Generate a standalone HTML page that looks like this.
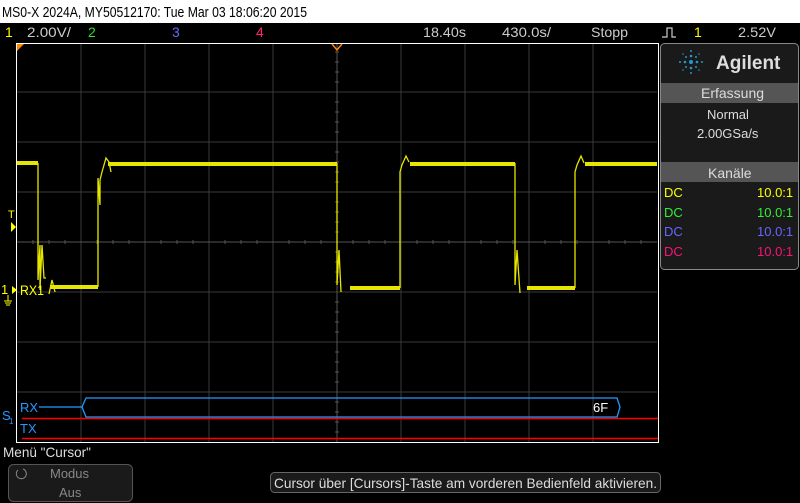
<!DOCTYPE html>
<html><head><meta charset="utf-8"><style>
html,body{margin:0;padding:0;background:#000;width:800px;height:503px;overflow:hidden}
svg{display:block}
text{font-family:"Liberation Sans",sans-serif}
</style></head><body>
<svg width="800" height="503" viewBox="0 0 800 503">
<rect width="800" height="503" fill="#000"/>
<rect width="800" height="23" fill="#fff"/>
<text x="2" y="17" font-size="15" fill="#000" textLength="305" lengthAdjust="spacingAndGlyphs">MS0-X 2024A, MY50512170: Tue Mar 03 18:06:20 2015</text>
<!-- top status -->
<g font-size="14">
<text x="5" y="37" fill="#ff0">1</text>
<text x="27" y="37" fill="#ccc" textLength="44" lengthAdjust="spacingAndGlyphs">2.00V/</text>
<text x="88" y="37" fill="#3d3">2</text>
<text x="172" y="37" fill="#66f">3</text>
<text x="256" y="37" fill="#f27">4</text>
<text x="423" y="37" fill="#ccc" textLength="43" lengthAdjust="spacingAndGlyphs">18.40s</text>
<text x="502" y="37" fill="#ccc" textLength="49" lengthAdjust="spacingAndGlyphs">430.0s/</text>
<text x="591" y="37" fill="#ccc" textLength="37" lengthAdjust="spacingAndGlyphs">Stopp</text>
<path d="M662,37 H667 V28 H672 V37 H676" stroke="#ccc" fill="none" stroke-width="1.2"/>
<text x="694" y="37" fill="#ff0">1</text>
<text x="738" y="37" fill="#ccc" textLength="38" lengthAdjust="spacingAndGlyphs">2.52V</text>
</g>
<!-- grid -->
<g stroke="#3a3a3a" stroke-width="1">
<path d="M81,43V442M145,43V442M209,43V442M273,43V442M401,43V442M465,43V442M529,43V442M593,43V442"/>
<path d="M17,92H657M17,142H657M17,192H657M17,292H657M17,342H657M17,392H657"/>
<path d="M17,242H657M337,43V442" stroke="#555"/>
</g>
<g stroke="#555">
<path d="M33,240v4M49,240v4M65,240v4M97,240v4M113,240v4M129,240v4M161,240v4M177,240v4M193,240v4M225,240v4M241,240v4M257,240v4M289,240v4M305,240v4M321,240v4M353,240v4M369,240v4M385,240v4M417,240v4M433,240v4M449,240v4M481,240v4M497,240v4M513,240v4M545,240v4M561,240v4M577,240v4M609,240v4M625,240v4M641,240v4"/>
<path d="M335,52h4M335,62h4M335,72h4M335,82h4M335,102h4M335,112h4M335,122h4M335,132h4M335,152h4M335,162h4M335,172h4M335,182h4M335,202h4M335,212h4M335,222h4M335,232h4M335,252h4M335,262h4M335,272h4M335,282h4M335,302h4M335,312h4M335,322h4M335,332h4M335,352h4M335,362h4M335,372h4M335,382h4M335,402h4M335,412h4M335,422h4M335,432h4"/>
</g>
<path d="M16.5,43V442.5H658.5V43.5H16" stroke="#fff" fill="none"/>
<path d="M17,44h7l-7,7z" fill="#f80"/>
<path d="M332,44l5,6l5,-6" stroke="#f80" fill="none" stroke-width="1.5"/>
<!-- waveform -->
<g stroke="#e6e600" fill="none">
<path stroke-width="4" d="M17,163H38M108,164H337M410,164H515M585,164H657M50,287H98M350,288H400M527,288H575"/>
<path stroke-width="1.3" d="M38,163V280L40,245V290L42,245L44,278H46M98,287V178L100,205V180L102,172L106,158L109,162L111,172M337,163V285L339,250L341,292M400,288V172L402,165L406,156L409,162M515,163V285L517,250L520,293M575,288V172L577,165L581,156L584,163M49,294L52,280L55,292"/>
</g>
<!-- left markers -->
<text x="8" y="218" font-size="11" fill="#ff0">T</text>
<path d="M11,222l5,5l-5,5z" fill="#ff0"/>
<text x="1" y="294" font-size="13" fill="#ff0">1</text>
<path d="M12,286l5,4l-5,4z" fill="#ff0"/>
<path d="M8,295v6M4,301h8M5,303h6M6,305h4" stroke="#ff0"/>
<text x="20" y="295" font-size="14" fill="#ff0" textLength="24" lengthAdjust="spacingAndGlyphs">RX1</text>
<!-- serial bus -->
<path d="M39,407H82L86,398H617L620,407L617,417H86L82,407" stroke="#29f" fill="none" stroke-width="1.3"/>
<text x="20" y="412" font-size="13" fill="#29f">RX</text>
<text x="20" y="433" font-size="13" fill="#29f">TX</text>
<text x="2" y="420" font-size="13" fill="#29f">S</text>
<text x="9" y="424" font-size="8" fill="#29f">1</text>
<text x="593" y="412" font-size="13" fill="#fff">6F</text>
<path d="M22,418.5H658M22,438.5H658" stroke="#f00" stroke-width="1.5"/>
<!-- menu -->
<text x="3" y="457" font-size="14" fill="#ddd" textLength="88" lengthAdjust="spacingAndGlyphs">Menü "Cursor"</text>
<rect x="8.5" y="464.5" width="124" height="37" rx="5" fill="#1a1a1a" stroke="#555"/>
<path d="M18,470a5,5 0 1 0 5,-1" stroke="#888" fill="none"/>
<text x="50" y="478" font-size="13" fill="#888">Modus</text>
<text x="59" y="497" font-size="13" fill="#888">Aus</text>
<rect x="270.5" y="472.5" width="390" height="20" rx="4" fill="#1a1a1a" stroke="#666"/>
<text x="274" y="488" font-size="14" fill="#ddd" textLength="383" lengthAdjust="spacingAndGlyphs">Cursor über [Cursors]-Taste am vorderen Bedienfeld aktivieren.</text>
<!-- right panel -->
<rect x="660.5" y="43.5" width="138" height="226" rx="4" fill="#1a1a1a" stroke="#888"/>
<g fill="#29c">
<circle cx="691" cy="62" r="2"/><circle cx="685" cy="62" r="1.3"/><circle cx="697" cy="62" r="1.3"/><circle cx="680" cy="62" r="1"/><circle cx="702" cy="62" r="1"/>
<circle cx="691" cy="56" r="1.3"/><circle cx="691" cy="68" r="1.3"/><circle cx="691" cy="51" r="1"/><circle cx="691" cy="73" r="1"/>
<circle cx="686" cy="57" r="1"/><circle cx="696" cy="57" r="1"/><circle cx="686" cy="67" r="1"/><circle cx="696" cy="67" r="1"/>
<circle cx="683" cy="54" r=".8"/><circle cx="699" cy="54" r=".8"/><circle cx="683" cy="70" r=".8"/><circle cx="699" cy="70" r=".8"/>
</g>
<text x="716" y="69" font-size="19" font-weight="bold" fill="#ddd">Agilent</text>
<rect x="661" y="83" width="137" height="20" fill="#555"/>
<text x="701" y="98" font-size="14" fill="#ddd">Erfassung</text>
<text x="707" y="119" font-size="13" fill="#ddd">Normal</text>
<text x="697" y="138" font-size="13" fill="#ddd">2.00GSa/s</text>
<rect x="661" y="162" width="137" height="20" fill="#555"/>
<text x="708" y="178" font-size="14" fill="#ddd">Kanäle</text>
<g font-size="13">
<text x="664" y="197" fill="#ff0">DC</text><text x="757" y="197" fill="#ff0">10.0:1</text>
<text x="664" y="217" fill="#3e3">DC</text><text x="757" y="217" fill="#3e3">10.0:1</text>
<text x="664" y="236" fill="#66f">DC</text><text x="757" y="236" fill="#66f">10.0:1</text>
<text x="664" y="256" fill="#f17">DC</text><text x="757" y="256" fill="#f17">10.0:1</text>
</g>
</svg>
</body></html>
